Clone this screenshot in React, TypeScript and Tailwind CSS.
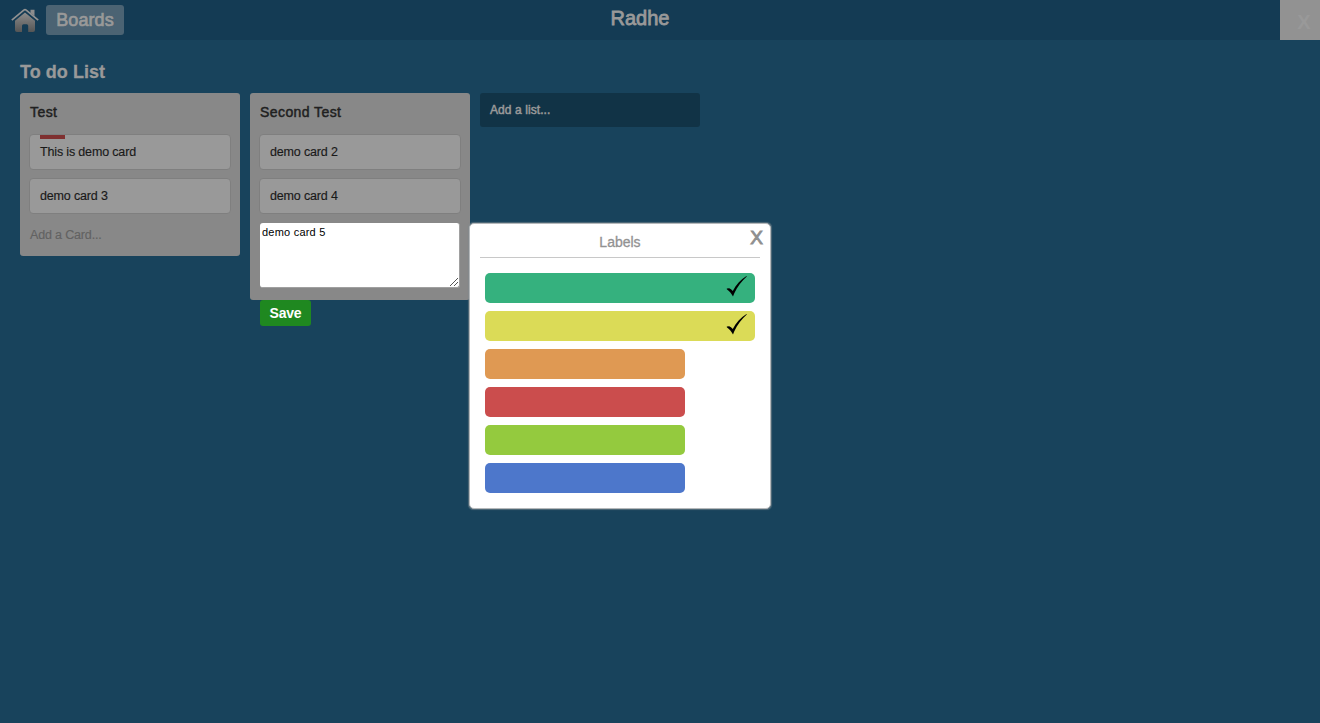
import React from "react";

function HomeIcon() {
  return (
    <svg className="h-[26px] w-[28px] shrink-0" viewBox="0 0 28 26" fill="none">
      <defs>
        <linearGradient id="home" x1="0" y1="5" x2="0" y2="25" gradientUnits="userSpaceOnUse">
          <stop stopColor="#8d8d8d" />
          <stop offset="1" stopColor="#555" />
        </linearGradient>
      </defs>
      <path d="M14 5.4 24 13.8V23a2 2 0 0 1-2 2H17.2v-6.2a1.5 1.5 0 0 0-1.5-1.5h-3.2a1.5 1.5 0 0 0-1.5 1.5V25H6a2 2 0 0 1-2-2v-9.2Z" fill="url(#home)" />
      <path d="M19.5 6V2.8h4V9Z" fill="#8d8d8d" />
      <path d="M14 4.4 25 13.6" stroke="#143b54" strokeWidth="1" />
      <path d="M.8 13.2 12.8 3.2q1.2-1 2.4 0L27.2 13.2" stroke="#929292" strokeWidth="1.7" />
    </svg>
  );
}

function Check() {
  return (
    <svg className="h-[22px] w-[22px]" viewBox="0 0 22 22">
      <path d="M1.8 12.4 4.2 12.2C5.4 12.8 6.6 13.7 7.8 14.9C11 8.8 15.6 3.4 21.5 0L21.8.5C17 4.6 12.3 10.6 9.2 17.4L8 20.4C6.2 17.3 4.3 14.9 1.8 13.2Z" fill="#000" />
    </svg>
  );
}

function Card({ text, label }: { text: string; label?: boolean }) {
  return (
    <div className="-mx-px mb-2 h-9 rounded-[4px] border border-[#7f7f7f] bg-[#999] pl-[10px]">
      <div className={label ? "h-1 w-[25px] bg-[#7f3030]" : "h-1 w-[25px]"} />
      <div className="pt-px text-[12.5px] leading-6 tracking-[-0.16px] text-[#191919] [-webkit-text-stroke:0.15px_#191919]">{text}</div>
    </div>
  );
}

function ListTitle({ children }: { children: React.ReactNode }) {
  return (
    <h3 className="h-[41px] pt-[9px] text-[14px] leading-5 tracking-[0.42px] text-[#202020] [-webkit-text-stroke:0.45px_#202020]">
      {children}
    </h3>
  );
}

const labels = [
  { color: "bg-[#35b17e]", checked: true },
  { color: "bg-[#dbdb57]", checked: true },
  { color: "bg-[#df9953]", checked: false },
  { color: "bg-[#cb4d4d]", checked: false },
  { color: "bg-[#94ca3e]", checked: false },
  { color: "bg-[#4d77cb]", checked: false },
];

export default function App() {
  return (
    <div className="relative h-[723px] w-[1320px] overflow-hidden bg-[#18435c] font-['Liberation_Sans',Arial,sans-serif]">
      <header className="flex h-10 bg-[#143b54]">
        <div className="grid flex-1 grid-cols-[1fr_auto_1fr]">
          <div className="flex items-center gap-[7px] pl-[11px]">
            <HomeIcon />
            <button className="h-[30px] w-[78px] rounded-[3px] bg-[#4b6373] text-[18px] leading-[30px] tracking-[0.1px] text-[#999] [-webkit-text-stroke:0.7px_#999]">Boards</button>
          </div>
          <h1 className="pt-1.5 text-[20px] leading-6 text-[#999] [-webkit-text-stroke:0.8px_#999]">Radhe</h1>
        </div>
        <button className="h-10 w-10 bg-[#929292] pl-2 pt-1 text-[20px] font-bold text-[#999]">X</button>
      </header>

      <main className="px-5">
        <h2 className="h-[53px] pt-5 text-[18px] font-bold leading-6 tracking-[0.05px] text-[#999] [-webkit-text-stroke:0.3px_#999]">To do List</h2>
        <div className="flex items-start gap-[10px]">
          <section className="h-[163px] w-[220px] rounded-[3px] bg-[#888] px-[10px]">
            <ListTitle>Test</ListTitle>
            <Card text="This is demo card" label />
            <Card text="demo card 3" />
            <div className="pt-[3px] text-[12.5px] leading-5 tracking-[-0.16px] text-[#626262] [-webkit-text-stroke:0.15px_#626262]">Add a Card...</div>
          </section>
          <section className="h-[207px] w-[220px] rounded-[3px] bg-[#888] px-[10px]">
            <ListTitle>Second Test</ListTitle>
            <Card text="demo card 2" />
            <Card text="demo card 4" />
            <div className="relative mt-[9px] h-[65px] w-[200px] rounded-[3px] border-r border-b border-[#a0a0a0] bg-white pl-[2px] pt-px text-[11px] leading-4 tracking-[0.22px] text-black">
              demo card 5
              <svg className="absolute bottom-px right-px h-2 w-2" viewBox="0 0 8 8" stroke="#555" strokeWidth="1">
                <path d="M0 8 8 0M4 8 8 4" />
              </svg>
            </div>
            <button className="mt-3 block h-[26px] w-[51px] rounded-[3px] bg-[#1f8820] text-[14px] font-bold leading-[26px] tracking-[-0.2px] text-white">Save</button>
          </section>
          <div className="h-[34px] w-[220px] rounded-[3px] bg-[#113346] pl-[10px] text-[12px] leading-[34px] tracking-[0.08px] text-[#999] [-webkit-text-stroke:0.5px_#999]">Add a list...</div>
        </div>
      </main>

      <div className="absolute left-[469px] top-[223px] h-[286px] w-[302px] rounded-[5px] border border-[#b5b8ba] bg-white px-[10px] shadow-[0_0_1px_0.5px_rgba(130,140,145,0.55)]">
        <div className="h-[34px] border-b border-[#c8c8c8] pt-2 text-center text-[14px] leading-5 text-[#929292] [-webkit-text-stroke:0.3px_#929292]">Labels</div>
        <button className="absolute right-[7px] top-[2px] text-[19px] leading-6 text-[#8f8f8f] [-webkit-text-stroke:0.9px_#8f8f8f]">X</button>
        <div className="flex flex-col gap-2 pl-[5px] pt-[15px]">
          {labels.map(({ color, checked }) => (
            <div key={color} className={`${color} ${checked ? "w-[270px]" : "w-[200px]"} flex h-[30px] justify-end rounded-[5px] pr-[8px] pt-[3px]`}>
              {checked && <Check />}
            </div>
          ))}
        </div>
      </div>
    </div>
  );
}
